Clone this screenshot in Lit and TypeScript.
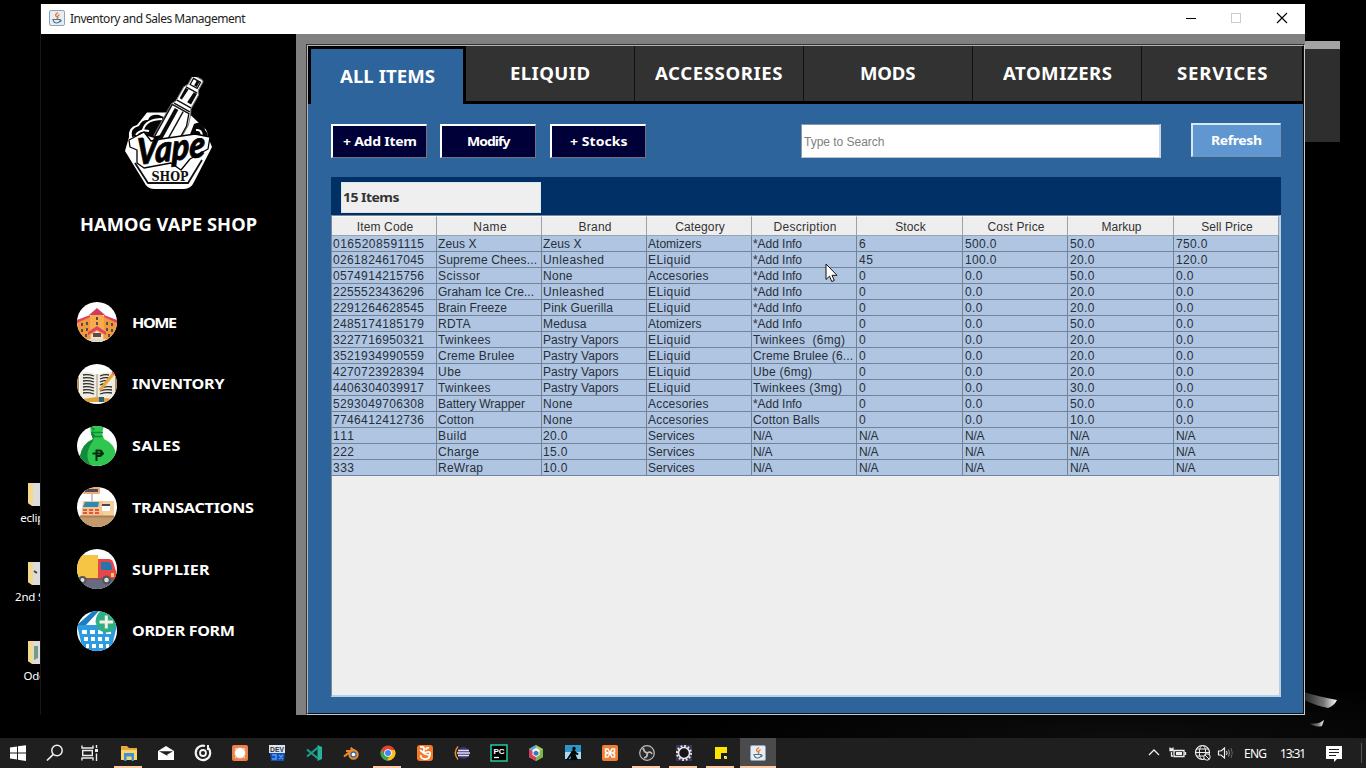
import { LitElement, html, svg, css } from "lit";
import { customElement } from "lit/decorators.js";

type Label = [string, number];

const TABS: Label[] = [
  ["ALL ITEMS", 95], ["ELIQUID", 80], ["ACCESSORIES", 127.5],
  ["MODS", 55.5], ["ATOMIZERS", 109], ["SERVICES", 90.5],
];

const HEADERS: Label[] = [
  ["Item Code", 56.5], ["Name", 33.5], ["Brand", 33], ["Category", 49.5], ["Description", 63],
  ["Stock", 30.5], ["Cost Price", 57], ["Markup", 40], ["Sell Price", 51.5],
];

const ROWS: string[][] = [
  ["0165208591115", "Zeus X", "Zeus X", "Atomizers", "*Add Info", "6", "500.0", "50.0", "750.0"],
  ["0261824617045", "Supreme Chees...", "Unleashed", "ELiquid", "*Add Info", "45", "100.0", "20.0", "120.0"],
  ["0574914215756", "Scissor", "None", "Accesories", "*Add Info", "0", "0.0", "50.0", "0.0"],
  ["2255523436296", "Graham Ice Cre...", "Unleashed", "ELiquid", "*Add Info", "0", "0.0", "20.0", "0.0"],
  ["2291264628545", "Brain Freeze", "Pink Guerilla", "ELiquid", "*Add Info", "0", "0.0", "20.0", "0.0"],
  ["2485174185179", "RDTA", "Medusa", "Atomizers", "*Add Info", "0", "0.0", "50.0", "0.0"],
  ["3227716950321", "Twinkees", "Pastry Vapors", "ELiquid", "Twinkees  (6mg)", "0", "0.0", "20.0", "0.0"],
  ["3521934990559", "Creme Brulee", "Pastry Vapors", "ELiquid", "Creme Brulee (6...", "0", "0.0", "20.0", "0.0"],
  ["4270723928394", "Ube", "Pastry Vapors", "ELiquid", "Ube (6mg)", "0", "0.0", "20.0", "0.0"],
  ["4406304039917", "Twinkees", "Pastry Vapors", "ELiquid", "Twinkees (3mg)", "0", "0.0", "30.0", "0.0"],
  ["5293049706308", "Battery Wrapper", "None", "Accesories", "*Add Info", "0", "0.0", "50.0", "0.0"],
  ["7746412412736", "Cotton", "None", "Accesories", "Cotton Balls", "0", "0.0", "10.0", "0.0"],
  ["111", "Build", "20.0", "Services", "N/A", "N/A", "N/A", "N/A", "N/A"],
  ["222", "Charge", "15.0", "Services", "N/A", "N/A", "N/A", "N/A", "N/A"],
  ["333", "ReWrap", "10.0", "Services", "N/A", "N/A", "N/A", "N/A", "N/A"],
];

/* Rendered widths of the cell strings, in pixels. */
const CELL_W: Record<string, number> = {
  "Zeus X": 38.5, "Supreme Chees...": 99, "Scissor": 42, "Graham Ice Cre...": 96, "Brain Freeze": 69,
  "RDTA": 32.5, "Twinkees": 52.5, "Creme Brulee": 76.5, "Ube": 23, "Battery Wrapper": 87, "Cotton": 36,
  "Build": 28.5, "Charge": 41, "ReWrap": 45, "Unleashed": 61, "None": 29.5, "Pink Guerilla": 70,
  "Medusa": 43.5, "Pastry Vapors": 75.5, "Atomizers": 53.5, "ELiquid": 42.5, "Accesories": 60.5, "Services": 46.5,
  "*Add Info": 49, "Twinkees  (6mg)": 92, "Creme Brulee (6...": 100, "Ube (6mg)": 59,
  "Twinkees (3mg)": 89, "Cotton Balls": 66.5, "N/A": 19.5,
};

const cellWidth = (t: string) => {
  if (CELL_W[t]) return CELL_W[t];
  return [...t].reduce((sum, c) => sum + (c === "." ? 3.4 : 7), 0);
};

const fit = (text: string, w: number) => html`<span class="fit" data-w=${w}>${text}</span>`;
const bold = (text: string, w: number) => html`<span class="fit" data-w=${w} data-stretch="1.075">${text}</span>`;

const logo = svg`
<svg width="90" height="114" viewBox="0 0 90 114">
  <path d="M23 35.500H64L76 47Q84 52 84 60L88 70L70 105Q67 112 60 112H30Q23 112 20 105L1 74L5 60Q4 50 13 48Z" fill="#fff"/>
  <path d="M8 60Q6 51 15 49Q18 42 24 43Q26 37 35 38L42 41L34 62L20 58ZM70 47Q80 43 81 53Q86 58 82 64L65 60Z" fill="#050505"/>
  <path d="M19 53Q22 42 38 42M12 58Q16 52 25 54M72 53Q78 52 78 60" fill="none" stroke="#fff" stroke-width="2"/>
  <g transform="translate(73.500 2.500) rotate(29)">
    <path d="M-6 0Q-6-2 -3-2H3Q6-2 6 0V9L8.500 13V29L11 34L14 44V70H-11V34L-8.500 29V13L-6 9Z" fill="#fff" stroke="#777" stroke-width="1"/>
    <path d="M-4 1H4V8H-4ZM-6.500 12H6.500M-8 28H8M-9 32H9" fill="none" stroke="#111" stroke-width="1.300"/>
    <path d="M0 1H3V7H0ZM-6.500 13H-3L-4 25H-6.500ZM3 13H6.500V25H2Z" fill="#0a0a0a"/>
    <path d="M-10 34H9L13 46V70M-10 34V70M3 35V70" fill="none" stroke="#111" stroke-width="1.400"/>
    <path d="M-6 36H-2V70H-6Z" fill="#0a0a0a"/>
  </g>
  <path d="M11 86L24 106H64L78 83" fill="none" stroke="#111" stroke-width="1.800"/>
  <path d="M5 63L20 55L27 64L37 62L71 57L86 60L84 72L66 82L57 93L47 86L20 91L13 86L13 73L6 70Z" fill="#fff" stroke="#000" stroke-width="1.300" stroke-linejoin="round"/>
  <text class="script" x="23" y="84" transform="rotate(-7 45 76) skewX(-8)" textLength="69" lengthAdjust="spacingAndGlyphs">Vape</text>
  <text class="slab" x="27.500" y="103.500" textLength="37" lengthAdjust="spacingAndGlyphs">SHOP</text>
</svg>`;

const disc = (id: string, body: unknown) => svg`
<svg width="40" height="40" viewBox="0 0 40 40">
  <clipPath id=${id}><circle cx="20" cy="20" r="20"/></clipPath>
  <g clip-path="url(#${id})"><rect width="40" height="40" fill="#fff"/>${body}</g>
</svg>`;

const home = disc("c1", svg`
  <path d="M0 18L20 13L40 18V40H0Z" fill="#f09a3c"/><path d="M13 14L20 8L27 14V40H13Z" fill="#f8ac4e"/>
  <path d="M12 13L20 6L28 13Z" fill="#d23c5c"/><path d="M0 18L13 13V15L0 21ZM40 18L27 13V15L40 21Z" fill="#e0455f"/>
  <path d="M11 33V30L20 24L29 30V33L20 28Z" fill="#e0455f"/><path d="M14 33L20 29L26 33V40H14Z" fill="#f6e0c4"/>
  <path d="M4 21h2v3h-2zM9 20h2v3h-2zM4 27h2v3h-2zM9 26h2v3h-2zM19 15h2v3h-2zM19 20h2v3h-2zM29 20h2v3h-2zM34 21h2v3h-2zM29 26h2v3h-2zM34 27h2v3h-2zM8 32h2v3h-2zM31 32h2v3h-2zM16 31h8v4h-8z" fill="#5a4a52"/>
  <path d="M0 37h40v3h-40z" fill="#d9d9c8"/>`);

const book = disc("c2", svg`
  <path d="M0 9h2v26H0zM37 12h3v22h-3z" fill="#b98a5a"/>
  <path d="M3 9Q12 6 20 11Q29 6 38 9V35H3Z" fill="#efece2"/><path d="M20 10V34" stroke="#c8c0b0" stroke-width="2"/>
  <path d="M6 11q5-1 11 1M6 14q5-1 11 1M6 17q5-1 11 1M6 20q5-1 11 1M6 23q5-1 11 1M6 26q5-1 11 1M6 29q5-1 11 1M23 12q5-2 9-1M23 15q5-2 9-1M23 18q5-2 7-1M23 21q5-2 5-1M25 24q5-2 10-1M23 27q6-2 12-1M23 30q6-2 12-1" fill="none" stroke="#2c2c2c" stroke-width="1.3"/>
  <path d="M23 26L37 9" stroke="#e9a43a" stroke-width="3"/><path d="M36 10L39 7" stroke="#e2604e" stroke-width="4"/>
  <path d="M5 35L20 33L36 35L30 38H10Z" fill="#e0a23c"/><path d="M22 33h5v5h-5z" fill="#315d78"/>`);

const bag = disc("c3", svg`
  <path d="M13 0H27L25 7L27 13Q38 18 39 29Q37 40 20 40Q4 40 3 30Q5 18 16 13L14 8Z" fill="#2fc750"/>
  <path d="M13 0L16 4L14 8L16 13Q5 18 3 30L8 40H14Q6 28 16 15L18 9L15 6L18 3Z" fill="#138a3c"/>
  <path d="M14 6.5h12M15 10.5h10" stroke="#138a3c" stroke-width="1.5"/>
  <path d="M19.500 35V24.500H22.500Q25 24.500 25 27Q25 30 22.500 30H20M15.500 27.500H27" fill="none" stroke="#072b12" stroke-width="2"/>`);

const till = disc("c4", svg`
  <rect y="29" width="40" height="11" fill="#c49a6c"/><path d="M6 14H36V30H4Z" fill="#f3c58e"/>
  <path d="M26 14h11v15H26z" fill="#f6d09c"/>
  <path d="M14 7h2v8h-2z" fill="#c8c8cc"/>
  <path d="M8 15h14l-1 5H6z" fill="#2a8cb4"/><rect x="25" y="17" width="8" height="7" fill="#fff"/><path d="M25 17h8v2h-8z" fill="#4b4455"/>
  <path d="M6 22h4v2h-4zM12 22h4v2h-4zM18 22h4v2h-4zM6 25h4v2h-4zM12 25h4v2h-4zM18 25h4v2h-4z" fill="#e5543e"/>
  <path d="M3 28.500h34v2H3z" fill="#a97f55"/></g><g>
  <rect x="6" y="0" width="17" height="7" rx="1" fill="#eab07a"/><rect x="8" y="2" width="13" height="3" fill="#5b4857"/>`);

const truck = disc("c5", svg`
  <rect y="31" width="40" height="9" fill="#666b80"/><path d="M0 6H21V31H0Z" fill="#f7c544"/>
  <path d="M21 10h11q4 0 5 6l2 6v9H21z" fill="#e8464a"/><path d="M24 13h8q2 0 3 6v2H24z" fill="#2477a8"/>
  <path d="M0 29h40v2H0z" fill="#8a5360"/><circle cx="5.500" cy="31" r="4" fill="#555"/><circle cx="5.500" cy="31" r="2" fill="#ddd"/>
  <circle cx="29.500" cy="31" r="4.500" fill="#555"/><circle cx="29.500" cy="31" r="2.300" fill="#ddd"/><rect x="34" y="24" width="3" height="4" fill="#ffcb4d"/>`);

const basket = disc("c6", svg`
  <path d="M0 14H40L34 40H6Z" fill="#2c9be0"/><path d="M0 14L16 0H22L9 14Z" fill="#1b7ec2"/><path d="M13 14L20 5V14Z" fill="#fff"/>
  <path d="M5 19h5v4h-5zM13 19h5v4h-5zM21 19h5v4h-5zM29 19h5v4h-5zM7 26h4v4h-4zM14 26h4v4h-4zM21 26h4v4h-4zM28 26h4v4h-4zM9 33h3v4h-3zM15 33h4v4h-4zM22 33h4v4h-4zM29 33h3v4h-3z" fill="#fff"/></g><g>
  <path d="M18.500 10.500Q19 3 24 0H38Q40 1 40 4V12Q38 21.500 29.500 21.500Q20 21 18.500 10.500Z" fill="#2fae86"/><path d="M22.500 11H36M29.300 4.500V17.500" stroke="#f3efe4" stroke-width="3"/>`);

const MENU: [string, number, unknown][] = [
  ["HOME", 45, home], ["INVENTORY", 92.5, book], ["SALES", 48.5, bag],
  ["TRANSACTIONS", 122, till], ["SUPPLIER", 77.5, truck], ["ORDER FORM", 103, basket],
];

const javaMark = svg`
  <rect x=".5" y=".5" width="15" height="15" rx="1.500" fill="#e6edf4" stroke="#8fa3b8"/>
  <path d="M9 2.500Q5 5 7.500 6.500T7.500 9M10.500 4.500Q8 6 9 8" fill="none" stroke="#e8792b" stroke-width="1.300"/>
  <path d="M4 9.500H11V11Q10 13 7.500 13Q5 13 4.500 11ZM11 10Q13.500 10 11 12" fill="none" stroke="#4d7592" stroke-width="1.100"/>`;

const ico = (body: unknown) => svg`<svg width="18" height="18" viewBox="0 0 18 18">${body}</svg>`;

const TASKS: [unknown, string][] = [
  [ico(svg`<path d="M1 3.500L8 2.500V8.600H1ZM9 2.300L17 1.200V8.600H9ZM1 9.500H8V15.600L1 14.600ZM9 9.500H17V17L9 15.800Z" fill="#fff"/>`), ""],
  [ico(svg`<circle cx="11" cy="6.500" r="5.200" fill="none" stroke="#eee" stroke-width="1.500"/><path d="M7.300 10.300L1 16.500" stroke="#eee" stroke-width="1.700"/>`), ""],
  [ico(svg`<path d="M1 1.500V4H12V1.500M1 16.500V14H12V16.500M1.700 6.500H11.300V11.500H1.700ZM15.500 1V4M15.500 9.500V17" fill="none" stroke="#eee" stroke-width="1.400"/><path d="M14 5h3v3h-3z" fill="#eee"/>`), "narrow"],
  [ico(svg`<path d="M1 2H7L9 4H17V16H1Z" fill="#e9a93a"/><path d="M1 6H17V16H1Z" fill="#fbd46c"/><path d="M4 9H14V17H11.500V12.500H6.500V17H4Z" fill="#3b93d6"/>`), "run"],
  [ico(svg`<path d="M1 7L9 2L17 7V16H1Z" fill="#fff"/><path d="M2 7.200H16L10 10.700L11 12L8 10.500Z" fill="#1f1f1f"/>`), ""],
  [ico(svg`<path d="M11 2A7.200 7.200 0 1 0 14.500 4.300" fill="none" stroke="#f3f3f3" stroke-width="2.200"/><circle cx="9" cy="9" r="3" fill="none" stroke="#f3f3f3" stroke-width="1.800"/><path d="M14 1V6" stroke="#f3f3f3" stroke-width="2"/>`), ""],
  [ico(svg`<rect x="1" y="1" width="16" height="16" rx="2" fill="#ee8147"/><path d="M4 4H14V14H4Z" fill="#f9d3bb"/><circle cx="9" cy="9" r="5.500" fill="#fff" stroke="#f0a077" stroke-width="1"/>`), ""],
  [ico(svg`<path d="M1 1H17V9H1Z" fill="#dbe5f5"/><path d="M2 9H17L16 17H3Z" fill="#174fae"/><text class="dev" x="2" y="7.800" textLength="14" lengthAdjust="spacingAndGlyphs">DEV</text><path d="M4 11H8V15H4M11 11L15 15M15 11L11 15" stroke="#4da0ff" fill="none" stroke-width="1.500"/>`), ""],
  [ico(svg`<path d="M12.500 1L17 3V15L12.500 17L12.500 12L12.500 6Z" fill="#25b39a"/><path d="M2 5.500L13 14.500M2 12.500L13 3.500" stroke="#1b9c8c" stroke-width="2.200"/>`), ""],
  [ico(svg`<path d="M2 12.500L9 7H4M8.500 4L14 8" fill="none" stroke="#f08a24" stroke-width="2.200"/><circle cx="11.500" cy="10.500" r="4.200" fill="#3a6fa8" stroke="#f08a24" stroke-width="2"/><circle cx="11.500" cy="10.500" r="1.800" fill="#fff"/>`), ""],
  [ico(svg`<circle cx="9" cy="9" r="7.500" fill="#e34335"/><path d="M2.500 5.300A7.500 7.500 0 0 0 8 16.500L12 10.500L5 10Z" fill="#34a853"/><path d="M15.800 6A7.500 7.500 0 0 1 8 16.500L12.500 9L10 6Z" fill="#fbc116"/><circle cx="9" cy="9" r="3.800" fill="#fff"/><circle cx="9" cy="9" r="3" fill="#4285f4"/>`), "run"],
  [ico(svg`<rect x="1" y="1" width="16" height="16" rx="3" fill="#f47b2a"/><path d="M4 3Q9 2 8 6T11 8Q15 7 14 11Q13 16 8 15Q4 14 5 11M13 4Q10 3 10 6M4 6L9 10L13 11" fill="none" stroke="#fff" stroke-width="1.800"/>`), ""],
  [ico(svg`<path d="M5 2.500Q-.5 9 5 15.500" fill="none" stroke="#e88b2e" stroke-width="1.500"/><circle cx="10.500" cy="9" r="6" fill="#3b3477"/><path d="M5 6.500H16M4 9H17M5 11.500H16" stroke="#dfe1f3" stroke-width="1.300"/>`), ""],
  [ico(svg`<rect x="1" y="1" width="16" height="16" fill="#000" stroke="#27c999" stroke-width="1.500"/><text class="pc" x="3.500" y="9.500" textLength="11">PC</text><path d="M4 13.500H9" stroke="#fff" stroke-width="1.300"/>`), ""],
  [ico(svg`<path d="M9 1L16 5V13L9 17L2 13V5Z" fill="#a8ce5a"/><path d="M2 5L9 1V9Z" fill="#5aa4d8"/><path d="M2 5V13L9 17V9Z" fill="#d9405f"/><path d="M16 5V13L9 17V9Z" fill="#7ab84a"/><path d="M5.500 6L9 4L12.500 6V11L9 13L5.500 11Z" fill="#fff"/><path d="M9 6.500L11.500 8V10.500L9 12L6.500 10.500V8Z" fill="#3878b8"/>`), ""],
  [ico(svg`<rect x="1" y="1" width="16" height="16" fill="#2e95c8"/><path d="M1 8H17V17H1Z" fill="#a9dbf0"/><path d="M1 15H17V17H1Z" fill="#10202a"/><circle cx="10" cy="4.500" r="1.700" fill="#050505"/><path d="M8 6.500Q11 5 12 8L14.500 9.500L14 11L11.500 10.500L14 16H6L7 12L4 16H2L6 10Z" fill="#050505"/>`), ""],
  [ico(svg`<rect x="1" y="1" width="16" height="16" rx="2" fill="#f07f33"/><path d="M4.500 5H7L11 13H13.500V10L11 9L13.500 8V5H11L7 13H4.500V10L7 9L4.500 8Z" fill="none" stroke="#fff" stroke-width="1.500"/>`), ""],
  [ico(svg`<circle cx="9" cy="9" r="7.300" fill="#2b2b2b" stroke="#bdbdbd" stroke-width="1.200"/><path d="M5 4Q6 8 9 9Q13 7 14 10M9 9Q10 13 6 14" fill="none" stroke="#bdbdbd" stroke-width="1.700"/>`), "run"],
  [ico(svg`<rect x="1" y="1" width="16" height="16" fill="#3c3758"/><circle cx="9" cy="9" r="5.500" fill="#161616" stroke="#e8e8ea" stroke-width="1.500"/><circle cx="9" cy="9" r="7" fill="none" stroke="#e8e8ea" stroke-width="2" stroke-dasharray="1.800 1.860"/>`), "run"],
  [ico(svg`<path d="M3 3H15V15H3Z" fill="#ffe400"/><path d="M9 9H15V12L12 15H9Z" fill="#1c1c10"/><path d="M12 15V12H15Z" fill="#f7f0ba"/>`), "run"],
  [ico(svg`<g transform="translate(1 1)">${javaMark}</g>`), "run on"],
];

@customElement("app-root")
export class AppRoot extends LitElement {
  static styles = css`
    :host { display: block; width: 1366px; height: 768px; overflow: hidden; background: #000; }
    * { box-sizing: border-box; }
    svg { display: block; flex: none; }
    .screen { position: relative; display: flex; flex-direction: column; height: 768px; font-family: "Noto Sans", sans-serif; }
    .desk { position: relative; flex: 1; background: radial-gradient(ellipse 460px 60px at 1120px 738px, #0d0d0d, #000); overflow: hidden; }
    .fit { display: inline-block; white-space: pre; transform-origin: 0 50%; }
    .shade { position: absolute; left: 1290px; top: 41px; width: 50px; height: 101px; background: #2e2e2e; border-top: 8px solid #a3a3a3; }
    .glint { position: absolute; left: 1304px; top: 688px; }
    .file { position: absolute; width: 74px; left: -3px; color: #fff; font-size: 11.5px; line-height: 16px; display: flex; flex-direction: column; align-items: center; gap: 2px; }
    .file span { white-space: nowrap; padding-left: 8px; letter-spacing: -0.2px; }
    .f1 { top: 482px; } .f2 { top: 561px; } .f3 { top: 640px; }

    .win { position: absolute; left: 40px; top: 4px; width: 1265px; height: 711px; display: flex; flex-direction: column; background: #000; border-left: 1px solid #161616; }
    .title { height: 30px; background: #fff; display: flex; align-items: center; padding: 0 11px 2px 8px; color: #222; font-size: 12px; gap: 5px; flex: none; }
    .title .fit { flex: none; }
    .ctl { margin-left: auto; display: flex; align-items: center; padding-bottom: 2px; }
    .main { flex: 1; display: flex; min-height: 0; }
    .side { width: 255px; color: #fff; display: flex; flex-direction: column; font-weight: 700; }
    .logo { margin: 43px 0 0 83px; height: 114px; }
    .shop { margin: 22px 0 0 39px; font-size: 17px; line-height: 24px; }
    .menu { margin-top: 65px; display: flex; flex-direction: column; gap: 21.800px; }
    .menu div { display: flex; align-items: center; gap: 15px; height: 40px; padding-left: 36px; font-size: 15px; }
    .menu .fit { margin-top: -1px; }
    .content { flex: 1; background: #808080; padding: 10px 0 0 10px; }
    .panel { height: 671px; width: 999px; background: #2d649c; border: 1px solid #c9c9c9; border-top-color: #333; border-left-color: #333; display: flex; flex-direction: column; }
    .inner { flex: 1; border: 1px solid #111; border-top-color: #b5b5b5; border-left-color: #b5b5b5; }
    .tabs { display: flex; height: 58px; background: #000; color: #fff; font-size: 17.300px; font-weight: 700; padding-right: 1px; }
    .tab { width: 169px; height: 55px; background: #323232; border-right: 1px solid #111; display: flex; align-items: center; justify-content: center; }
    .tab.t0 { width: 158px; height: 58px; background: #2d649c; border: solid #000; border-width: 3px 3px 0 3px; flex: none; }
    .tab.t5 { flex: 1; border: 0; }
    .tools { display: flex; padding: 20px 22px 0 23px; height: 73px; align-items: flex-start; }
    .btn { width: 96px; height: 34px; background: #000038; border: 2px solid #fff; border-right: 1px solid #77707a; border-bottom: 1px solid #77707a; color: #fff; font-weight: 700; font-size: 13px; display: flex; align-items: center; justify-content: center; margin-right: 13px; padding-bottom: 2px; }
    .btn.third { margin: 0 0 0 1px; }
    .search { width: 360px; height: 34px; background: #fff; border: 1px solid #8b98a5; border-right: 2px solid #ccd6df; border-bottom-color: #bcc5cd; margin-left: 155px; display: flex; align-items: center; padding: 1px 0 0 2px; font: 12px "Liberation Sans", sans-serif; color: #808080; }
    .refresh { width: 90px; margin: -1px 0 0 30px; background: #6197d1; border-color: #d5e8fa #7792b0 #7792b0 #d5e8fa; }
    .band { height: 38px; margin: 0 22px 0 23px; background: #003066; padding: 5px 0 0 10px; }
    .count { width: 200px; height: 31px; background: #efefef; border: 1px solid #dce4ec; color: #333; font-weight: 700; font-size: 13px; display: flex; align-items: center; padding: 0 0 2px 1px; }
    .pane { margin: 0 22px 0 23px; height: 482px; background: #eee; border: 1px solid #b8cfe5; border-top-color: #7a8a99; border-left-color: #7a8a99; border-right-width: 2px; border-bottom-width: 2px; font: 12px/15px "Liberation Sans", sans-serif; color: #262f3a; }
    .row { display: grid; grid-template-columns: 105px 105px 105px 105px 105px 106px 105px 106px 105px; height: 16px; }
    .cell { background: #b0c5e1; border-right: 1px solid #718399; border-bottom: 1px solid #718399; padding: 1px 0 0 1px; overflow: hidden; line-height: 15px; }
    .cell:nth-child(n + 6) { padding-left: 2px; }
    .head { height: 20px; }
    .head .cell { background: #eee; border-color: #97a3ae; border-top: 1px solid #fafafa; text-align: center; line-height: 20px; color: #333; padding: 0 0 0 2px; }

    .bar { height: 30px; background: #1f1f1f; display: flex; color: #fff; font-size: 12px; }
    .task { width: 37px; height: 30px; display: flex; align-items: center; justify-content: center; position: relative; padding-right: 2px; flex: none; }
    .task.narrow { padding-right: 6px; }
    .task.run::after { content: ""; position: absolute; left: 3px; right: 6px; bottom: 0; height: 2px; background: #fbc9a6; }
    .task.on { width: 36px; background: #4b4b4b; padding-right: 1px; }
    .task.on::after { left: 0; right: 0; }
    .tray { margin-left: auto; display: flex; align-items: center; padding-right: 4px; }
    .lang { margin: 0 13px 0 11px; }
    .script { font: 900 36px Lato, sans-serif; font-style: italic; fill: #000; stroke: #000; stroke-width: .8px; }
    .slab { font: 700 12.500px "DejaVu Serif", serif; fill: #111; }
    .dev { font: 700 6.500px "Liberation Sans", sans-serif; fill: #333; }
    .pc { font: 700 8px "Liberation Sans", sans-serif; fill: #fff; }
    .cursor { position: absolute; left: 825px; top: 263px; }
  `;

  /* Tracks every fitted label out (or in) to its intended width; bold labels are also drawn slightly extended. */
  firstUpdated() {
    this.renderRoot.querySelectorAll<HTMLElement>(".fit").forEach((el) => {
      const n = (el.textContent ?? "").length;
      if (n < 2) return;
      const target = Number(el.dataset.w);
      const stretch = Number(el.dataset.stretch ?? 1);
      const gap = target / stretch - el.getBoundingClientRect().width;
      const step = gap / (n - 1);
      el.style.letterSpacing = step.toFixed(3) + "px";
      el.style.marginRight = (target - target / stretch - step).toFixed(3) + "px";
      if (stretch !== 1) el.style.transform = `scaleX(${stretch})`;
    });
  }

  private folder(cls: string, name: string, mark: unknown) {
    return html`<div class="file ${cls}">
      <svg width="16" height="26" viewBox="0 0 16 26"><path d="M2 1H16V24H6L2 21Z" fill="#dcdcdc"/><path d="M2 1H7V24L2 21Z" fill="#f4d88c"/>${mark}</svg>
      <span>${name}</span></div>`;
  }

  render() {
    return html`<div class="screen">
      <div class="desk">
        <div class="shade"></div>
        <svg class="glint" width="34" height="42" viewBox="0 0 34 42">
          <defs><linearGradient id="g" x1="0" x2="1"><stop offset="0" stop-color="#222"/><stop offset=".6" stop-color="#777"/><stop offset="1" stop-color="#fff"/></linearGradient></defs>
          <path d="M0 4Q12 8 33 12Q30 18 24 20Q10 17 0 12Z" fill="url(#g)"/>
          <path d="M5 35Q14 37 20 32L18 38Q12 40 5 35Z" fill="url(#g)"/>
        </svg>
        ${this.folder("f1", "eclipse", "")}
        ${this.folder("f2", "2nd Sem", svg`<path d="M8 10L11 12" stroke="#444" stroke-width="2"/>`)}
        ${this.folder("f3", "Odoo", svg`<path d="M8 6H12V18L8 20Z" fill="#6f9c88"/>`)}

        <div class="win">
          <div class="title">
            <svg width="16" height="16" viewBox="0 0 16 16">${javaMark}</svg>
            ${fit("Inventory and Sales Management", 175.5)}
            <div class="ctl">
              <svg width="110" height="16" viewBox="0 0 110 16"><path d="M2 9.500H12" stroke="#000"/><rect x="47.500" y="4.500" width="9" height="9" fill="none" stroke="#ccc"/><path d="M93 4L103 14M103 4L93 14" stroke="#000" stroke-width="1.200"/></svg>
            </div>
          </div>
          <div class="main">
            <div class="side">
              <div class="logo">${logo}</div>
              <div class="shop">${bold("HAMOG VAPE SHOP", 177)}</div>
              <div class="menu">${MENU.map(([t, w, i]) => html`<div>${i}${bold(t, w)}</div>`)}</div>
            </div>
            <div class="content"><div class="panel"><div class="inner">
              <div class="tabs">${TABS.map(([t, w], i) => html`<div class="tab t${i}">${bold(t, w)}</div>`)}</div>
              <div class="tools">
                <div class="btn">${bold("+ Add Item", 74)}</div>
                <div class="btn">${bold("Modify", 43.5)}</div>
                <div class="btn third">${bold("+ Stocks", 57.5)}</div>
                <div class="search">${fit("Type to Search", 80.5)}</div>
                <div class="btn refresh">${bold("Refresh", 51)}</div>
              </div>
              <div class="band"><div class="count">${bold("15 Items", 56.5)}</div></div>
              <div class="pane">
                <div class="row head">${HEADERS.map(([t, w]) => html`<div class="cell">${fit(t, w)}</div>`)}</div>
                ${ROWS.map((r) => html`<div class="row">${r.map((t) => html`<div class="cell">${fit(t, cellWidth(t))}</div>`)}</div>`)}
              </div>
            </div></div></div>
          </div>
        </div>
      </div>
      <div class="bar">
        ${TASKS.map(([i, c]) => html`<div class="task ${c}">${i}</div>`)}
        <div class="tray">
          <svg width="86" height="20" viewBox="0 0 86 20" fill="none" stroke="#eee">
            <path d="M2 12L7 7L12 12" stroke-width="1.300"/>
            <path d="M27 7.500H37V13.500H27ZM38.500 9V12" stroke-width="1.300"/><path d="M29 9h6v3h-6z" fill="#eee" stroke="none"/><path d="M24.500 9V13H26M23 4.500V7.500H26V4.500M23 6H26" stroke-width="1.300"/>
            <circle cx="55.500" cy="9.500" r="7" stroke-width="1.200"/><ellipse cx="55.500" cy="9.500" rx="3.200" ry="7"/><path d="M48.500 9.500H62.500M49.500 6H61.500M49.500 13H57.500"/><circle cx="60" cy="14" r="3.200" fill="#1f1f1f"/><path d="M58 12L62 16"/>
            <path d="M71.500 8H74L77.500 5V15L74 12H71.500Z" stroke-width="1.200"/><path d="M79.500 8Q80.700 10 79.500 12"/><path d="M81.500 6.500Q83.500 10 81.500 13.500" stroke="#999"/><path d="M84 5Q86.500 10 84 15" stroke="#666"/>
          </svg>
          <span class="lang">${fit("ENG", 23)}</span>
          ${fit("13:31", 26)}
          <svg width="56" height="20" viewBox="0 0 56 20"><path d="M20 3H36V16H31L28 19V16H20Z" fill="#fff"/><path d="M23 6.500H33M23 9.500H33M23 12.500H30" stroke="#1f1f1f" stroke-width="1.200"/><path d="M55.500 0V20" stroke="#555"/></svg>
        </div>
      </div>
      <svg class="cursor" width="13" height="20" viewBox="0 0 13 20"><path d="M1 1V16.500L4.500 13.200L6.800 18.500L9.300 17.400L7 12.300H12Z" fill="#fff" stroke="#111" stroke-width="1"/></svg>
    </div>`;
  }
}
